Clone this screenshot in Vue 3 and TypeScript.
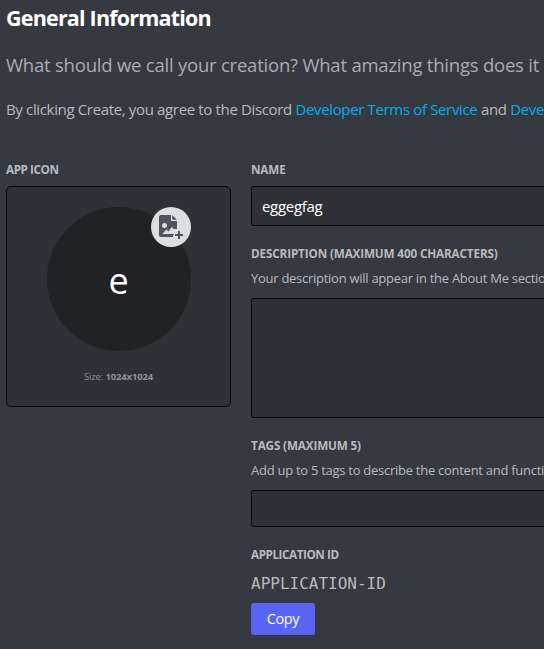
<script setup lang="ts">
import { ref } from 'vue'

const name = ref('eggegfag')
const description = ref('')
const tags = ref('')
const applicationId = 'APPLICATION-ID'
</script>

<template>
  <main class="page">
    <h1 class="title">General Information</h1>
    <p class="lead">What should we call your creation? What amazing things does it</p>
    <p class="terms">
      By clicking Create, you agree to the Discord <a>Developer Terms of Service</a> and <a>Deve</a>
    </p>

    <div class="columns">
      <section class="icon-column">
        <h2 class="label tight">APP ICON</h2>
        <div class="icon-card">
          <div class="avatar">
            <span class="initial">{{ name.charAt(0) }}</span>
            <span class="badge">
              <svg width="24" height="24" viewBox="0 0 24 24" aria-hidden="true">
                <path
                  fill="#4f545c"
                  fill-rule="evenodd"
                  d="M2 0H12V6H18V14H15V20H14V22H2A2 2 0 0 1 0 20V2A2 2 0 0 1 2 0ZM5.5 8A2.5 2.5 0 1 0 5.5 13A2.5 2.5 0 1 0 5.5 8ZM3 19H15V14L12.5 12L9.5 16.5L7.5 14.5Z"
                />
                <path fill="#4f545c" d="M13.2 0L18 4.8H13.2Z" />
                <path fill="#4f545c" d="M19 16H21V19H24V21H21V24H19V21H16V19H19Z" />
              </svg>
            </span>
          </div>
          <p class="size">Size: <strong>1024x1024</strong></p>
        </div>
      </section>

      <section class="fields">
        <label class="label" for="name">NAME</label>
        <input id="name" v-model="name" class="control name" type="text" />

        <label class="label" for="description">DESCRIPTION (MAXIMUM 400 CHARACTERS)</label>
        <p class="helper">Your description will appear in the About Me sectio</p>
        <textarea id="description" v-model="description" class="control description"></textarea>

        <label class="label" for="tags">TAGS (MAXIMUM 5)</label>
        <p class="helper">Add up to 5 tags to describe the content and functi</p>
        <input id="tags" v-model="tags" class="control tags" type="text" />

        <h2 class="label tight">APPLICATION ID</h2>
        <p class="app-id">{{ applicationId }}</p>
        <button class="copy" type="button">Copy</button>
      </section>
    </div>
  </main>
</template>

<style>
body {
  margin: 0;
  background: #36393f;
}
</style>

<style scoped>
.page {
  box-sizing: border-box;
  width: 100%;
  height: 649px;
  padding: 2px 0 0 6px;
  overflow: hidden;
  background: #36393f;
  color: #b9bbbe;
  font-family: "Open Sans", "Noto Sans", sans-serif;
}

h1,
h2,
p {
  margin: 0;
}

.title {
  color: #fff;
  font-size: 21.5px;
  font-weight: 700;
  line-height: 32px;
  letter-spacing: -0.8px;
}

.lead {
  margin-top: 19px;
  color: #a9acb0;
  font-size: 18.5px;
  line-height: 24px;
  letter-spacing: -0.22px;
  white-space: nowrap;
}

.terms {
  margin-top: 22px;
  font-size: 15px;
  line-height: 20px;
  letter-spacing: -0.35px;
  white-space: nowrap;
}

.terms a {
  color: #00aff4;
}

.columns {
  display: flex;
  gap: 20px;
  margin-top: 42px;
}

.icon-column {
  flex: none;
  width: 225px;
}

.label {
  display: block;
  font-size: 11.7px;
  font-weight: 700;
  line-height: 16px;
  letter-spacing: -0.13px;
  white-space: nowrap;
}

.label.tight {
  letter-spacing: -0.43px;
}

.icon-card {
  display: flex;
  flex-direction: column;
  align-items: center;
  box-sizing: border-box;
  height: 221px;
  margin-top: 9px;
  padding-top: 20px;
  border: 1px solid #040405;
  border-radius: 5px;
  background: #2f3136;
}

.avatar {
  position: relative;
  display: flex;
  align-items: center;
  justify-content: center;
  width: 144px;
  height: 144px;
  border-radius: 50%;
  background: #202225;
  color: #fff;
  font-size: 36px;
}

.initial {
  padding-top: 3px;
}

.badge {
  position: absolute;
  top: 0;
  right: 0;
  box-sizing: border-box;
  width: 40px;
  height: 40px;
  padding: 8px;
  border-radius: 50%;
  background: #dcddde;
}

.badge svg {
  display: block;
}

.size {
  margin-top: 18px;
  color: #8e9297;
  font-size: 9.5px;
  line-height: 16px;
  letter-spacing: -0.15px;
}

.fields {
  display: flex;
  flex: none;
  flex-direction: column;
  align-items: flex-start;
  width: 420px;
}

.control {
  box-sizing: border-box;
  width: 100%;
  margin: 10px 0 19px;
  padding: 0 10px;
  border: 1px solid #040405;
  border-radius: 3px;
  outline: none;
  background: #2f3136;
  color: #dcddde;
  font: 400 15px "Open Sans", "Noto Sans", sans-serif;
  letter-spacing: -0.3px;
  resize: none;
}

.name {
  height: 40px;
  margin-top: 9px;
  color: #fff;
}

.description {
  height: 120px;
}

.tags {
  height: 37px;
}

.helper {
  margin-top: 7px;
  font-size: 13px;
  line-height: 20px;
  letter-spacing: -0.27px;
  white-space: nowrap;
}

.app-id {
  margin-top: 12px;
  font: 16px/20px "DejaVu Sans Mono", monospace;
}

.copy {
  width: 64px;
  height: 32px;
  margin-top: 9px;
  padding: 0 0 1px;
  border: 0;
  border-radius: 3px;
  background: #5865f2;
  color: #fff;
  font: 400 14.5px "Open Sans", "Noto Sans", sans-serif;
  letter-spacing: -0.4px;
}
</style>
